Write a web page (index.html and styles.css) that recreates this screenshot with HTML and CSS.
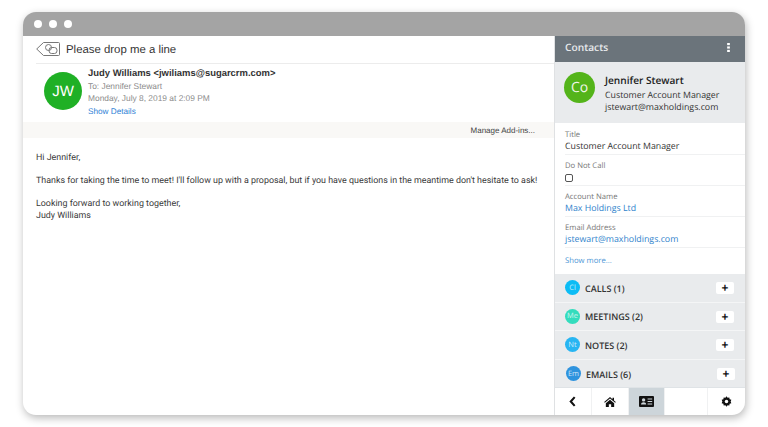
FILE: index.html
```html
<!DOCTYPE html>
<html lang="en">
<head>
    <meta charset="UTF-8">
    <meta name="viewport" content="width=device-width, initial-scale=1.0">
    <title>Contacts Add-in</title>
    <link rel="stylesheet" href="styles.css">
</head>
<body>
    <div class="window">
        <div class="titlebar">
            <span class="dot"></span>
            <span class="dot"></span>
            <span class="dot"></span>
        </div>
        <div class="panes">
            <div class="mail">
                <div class="subject">
                    <svg class="tag-icon" width="24" height="14" viewBox="0 0 24 14" fill="none" stroke="#777" stroke-width="1">
                        <path d="M7.500 .5H22.500a1 1 0 0 1 1 1V12.500a1 1 0 0 1-1 1H7.500L.7 7Z"/>
                        <circle cx="12.500" cy="5.500" r="3"/>
                        <rect x="13" y="5.500" width="8" height="6" rx="2.600"/>
                    </svg>
                    <span>Please drop me a line</span>
                </div>
                <div class="sender">
                    <div class="avatar-jw">JW</div>
                    <div class="sender-info">
                        <div class="from">Judy Williams &lt;jwiliams@sugarcrm.com&gt;</div>
                        <div class="meta">To: Jennifer Stewart</div>
                        <div class="meta">Monday, July 8, 2019 at 2:09 PM</div>
                        <a class="details">Show Details</a>
                    </div>
                </div>
                <div class="addins">Manage Add-ins...</div>
                <div class="message">
                    <p>Hi Jennifer,</p>
                    <p>Thanks for taking the time to meet! I'll follow up with a proposal, but if you have questions in the meantime don't hesitate to ask!</p>
                    <p>Looking forward to working together,<br>Judy Williams</p>
                </div>
            </div>
            <div class="side">
                <div class="side-head">
                    <span>Contacts</span>
                    <svg width="3" height="9" viewBox="0 0 3 10" fill="#fff">
                        <rect width="3" height="2.400"/>
                        <rect y="3.800" width="3" height="2.400"/>
                        <rect y="7.600" width="3" height="2.400"/>
                    </svg>
                </div>
                <div class="card">
                    <div class="avatar-co">Co</div>
                    <div class="card-text">
                        <div class="card-name">Jennifer Stewart</div>
                        <div class="card-line">Customer Account Manager</div>
                        <div class="card-line">jstewart@maxholdings.com</div>
                    </div>
                </div>
                <div class="fields">
                    <div class="field">
                        <div class="label">Title</div>
                        <div class="value">Customer Account Manager</div>
                    </div>
                    <div class="field">
                        <div class="label">Do Not Call</div>
                        <div class="value"><span class="checkbox"></span></div>
                    </div>
                    <div class="field">
                        <div class="label">Account Name</div>
                        <div class="value link">Max Holdings Ltd</div>
                    </div>
                    <div class="field">
                        <div class="label">Email Address</div>
                        <div class="value link">jstewart@maxholdings.com</div>
                    </div>
                    <div class="more">Show more...</div>
                </div>
                <div class="rows">
                    <div class="row">
                        <span class="badge calls">Cl</span>
                        <span class="row-name">CALLS (1)</span>
                        <span class="plus">+</span>
                    </div>
                    <div class="row">
                        <span class="badge meetings">Me</span>
                        <span class="row-name">MEETINGS (2)</span>
                        <span class="plus">+</span>
                    </div>
                    <div class="row">
                        <span class="badge notes">Nt</span>
                        <span class="row-name">NOTES (2)</span>
                        <span class="plus">+</span>
                    </div>
                    <div class="row">
                        <span class="badge emails">Em</span>
                        <span class="row-name">EMAILS (6)</span>
                        <span class="plus">+</span>
                    </div>
                </div>
                <div class="nav">
                    <div class="nav-item">
                        <svg width="7" height="11" viewBox="0 0 8 12" fill="none" stroke="#111" stroke-width="2.400"><path d="M6.500 1 2 6l4.500 5"/></svg>
                    </div>
                    <div class="nav-item">
                        <svg width="12" height="10" viewBox="0 0 14 12" fill="#111">
                            <path d="M7 0 0 6l.8 1L7 1.800 13.200 7l.8-1-2.200-1.900V.8H10v1.800Z"/>
                            <path d="M2 7.400 7 3.200l5 4.200V12H8.400V8.600H5.600V12H2Z"/>
                        </svg>
                    </div>
                    <div class="nav-item active">
                        <svg width="15" height="11" viewBox="0 0 15 11">
                            <rect width="15" height="11" rx="1" fill="#111"/>
                            <circle cx="4.600" cy="3.900" r="1.700" fill="#cdd5da"/>
                            <path d="M2 8.600c0-3 5.200-3 5.200 0Z" fill="#cdd5da"/>
                            <path d="M8.600 3h4.600M8.600 5.500h4.600M8.600 8h4.600" stroke="#cdd5da"/>
                        </svg>
                    </div>
                    <div class="nav-item wide"></div>
                    <div class="nav-item">
                        <svg width="11" height="11" viewBox="0 0 12 12">
                            <path d="M6 .4 7.200 2l1.900-.4.3 2 1.900.6-.8 1.800.8 1.800-1.900.6-.3 2-1.900-.4L6 11.600 4.800 10l-1.900.4-.3-2-1.900-.6L1.500 6 .7 4.200l1.900-.6.3-2L4.800 2Z" fill="#111"/>
                            <circle cx="6" cy="6" r="1.900" fill="#fff"/>
                        </svg>
                    </div>
                </div>
            </div>
        </div>
    </div>
</body>
</html>
```

FILE: styles.css
```css
* { box-sizing: border-box; }

html, body { height: 100%; }

body {
    margin: 0;
    padding: 12px 23px;
    background: #fff;
    overflow: hidden;
    font-family: "Liberation Sans", Arial, sans-serif;
    text-rendering: geometricPrecision;
}

.window {
    height: 403px;
    display: flex;
    flex-direction: column;
    background: #fff;
    border-radius: 13px;
    overflow: hidden;
    box-shadow: 1px 3px 9px rgba(0, 0, 0, 0.28);
}

.titlebar {
    height: 24px;
    flex: none;
    display: flex;
    align-items: center;
    gap: 7px;
    padding-left: 11px;
    background: #a4a4a4;
}

.dot {
    width: 8px;
    height: 8px;
    border-radius: 50%;
    background: #fff;
}

.panes {
    flex: 1;
    min-height: 0;
    display: flex;
}

/* mail side */
.mail {
    width: 531px;
    flex: none;
    display: flex;
    flex-direction: column;
}

.subject {
    height: 28px;
    margin-left: 13px;
    display: flex;
    align-items: center;
    gap: 6px;
    border-bottom: 1px solid #ececec;
    font-size: 11.400px;
    color: #333;
}

.tag-icon { margin-top: -2px; }

.sender {
    height: 58px;
    display: flex;
    padding: 8px 0 0 21px;
    gap: 6px;
}

.avatar-jw {
    width: 38px;
    height: 38px;
    flex: none;
    border-radius: 50%;
    background: #1fb025;
    color: #fff;
    font-size: 15px;
    display: flex;
    align-items: center;
    justify-content: center;
}

.from {
    font-size: 9.450px;
    font-weight: bold;
    color: #333;
    line-height: 12px;
    margin-top: -4px;
}

.meta {
    font-size: 8.400px;
    color: #8c8c8c;
    line-height: 11px;
    margin-top: 1px;
}

.details {
    display: block;
    font-size: 8.200px;
    color: #2f7fd6;
    line-height: 12px;
    margin-top: 2px;
}

.addins {
    height: 16px;
    padding-right: 19px;
    background: #f9f8f6;
    font-size: 8px;
    line-height: 17px;
    text-align: right;
    color: #444;
}

.message {
    padding: 15px 0 0 13px;
    font-family: Roboto, sans-serif;
    font-size: 8.900px;
    line-height: 11.500px;
    color: #3a3a3a;
}

.message p { margin: 0 0 11.500px; }

/* contacts panel */
.side {
    flex: 1;
    min-width: 0;
    display: flex;
    flex-direction: column;
    border-left: 1px solid #dfe1e3;
    font-family: "Open Sans", sans-serif;
}

.side-head {
    height: 26px;
    flex: none;
    display: flex;
    align-items: center;
    justify-content: space-between;
    padding: 0 15px 4px 10px;
    background: #6b747b;
    color: #e8eaec;
    font-size: 10.200px;
    font-weight: 600;
}

.card {
    height: 61px;
    flex: none;
    display: flex;
    align-items: flex-start;
    gap: 10px;
    padding: 10px 9px 0;
    background: #e9ebed;
}

.avatar-co {
    width: 31px;
    height: 31px;
    flex: none;
    border-radius: 50%;
    background: #54b41a;
    color: #f1f6ea;
    font-size: 14px;
    display: flex;
    align-items: center;
    justify-content: center;
}

.card-text { padding-top: 1px; }

.card-name {
    font-size: 10.100px;
    font-weight: 600;
    color: #222;
    line-height: 15px;
    margin-bottom: 1px;
}

.card-line {
    font-size: 8.800px;
    color: #333;
    line-height: 12px;
}

.fields {
    flex: 1;
    min-height: 0;
    padding: 1px 0 0 10px;
}

.field {
    height: 31px;
    padding-top: 6px;
    border-bottom: 1px solid #f0f1f2;
}

.label {
    font-size: 7.700px;
    line-height: 10px;
    color: #777;
}

.value {
    font-size: 8.800px;
    line-height: 13px;
    color: #333;
}

.link { color: #2f83cc; }

.checkbox {
    display: block;
    width: 8px;
    height: 8px;
    margin-top: 3px;
    border: 1px solid #555;
    border-radius: 2px;
}

.more {
    margin-top: 8px;
    font-size: 7.700px;
    line-height: 11px;
    color: #4d96d6;
}

/* last row runs under the nav bar */
.rows {
    height: 113px;
    flex: none;
    overflow: hidden;
}

.row {
    height: 28.600px;
    display: flex;
    align-items: center;
    padding: 0 11px 0 10px;
    background: #e9ebed;
    border-bottom: 1px solid #f4f5f6;
}

.row:last-child { padding: 0 10px 0 11px; }

.badge {
    width: 15px;
    height: 15px;
    flex: none;
    border-radius: 50%;
    color: rgba(255, 255, 255, 0.75);
    font-size: 7.500px;
    display: flex;
    align-items: center;
    justify-content: center;
}

.calls { background: #0cbcf5; }
.meetings { background: #33dcbd; }
.notes { background: #27b5f2; }
.emails { background: #2e93de; }

.row-name {
    flex: 1;
    margin: 1px 0 0 5px;
    font-size: 9px;
    font-weight: 600;
    color: #333;
}

.plus {
    width: 18px;
    height: 12px;
    margin-top: 1px;
    border-radius: 2px;
    background: #fff;
    color: #111;
    font-size: 12px;
    font-weight: 700;
    line-height: 12px;
    text-align: center;
}

.nav {
    height: 28px;
    flex: none;
    display: flex;
    border-top: 1px solid #dfe3e6;
}

.nav-item {
    width: 37px;
    display: flex;
    align-items: center;
    justify-content: center;
    border-right: 1px solid #f0f1f2;
}

.nav-item:last-child { border-right: none; }
.nav-item.wide { width: 43px; }
.nav-item.active { background: #cdd5da; }
```
